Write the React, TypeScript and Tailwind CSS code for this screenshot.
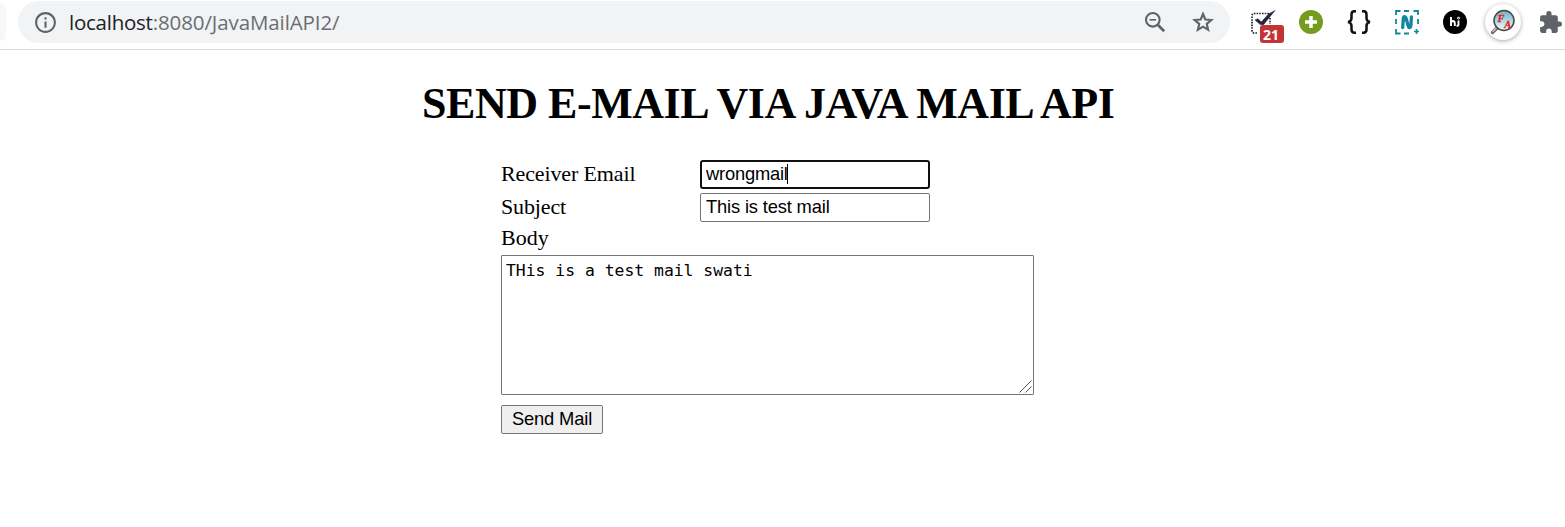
import { MdExtension, MdInfoOutline } from "react-icons/md";

function StarIcon() {
  return (
    <svg width="26" height="26" viewBox="0 0 24 24" fill="none" stroke="#5f6368" strokeWidth="2">
      <path d="M12 4.600l2.150 5.080 5.500.47-4.170 3.620 1.250 5.380L12 16.300l-4.730 2.850 1.250-5.380-4.170-3.620 5.500-.47z" />
    </svg>
  );
}

function ZoomOutIcon() {
  return (
    <svg width="22" height="22" viewBox="0 0 22 22" fill="none" stroke="#5f6368" strokeWidth="2.1">
      <circle cx="8.8" cy="8.8" r="6.8" />
      <path d="M13.500 13.500l6.700 6.700" strokeWidth="2.7" />
      <path d="M5.500 8.800h6.600" strokeWidth="1.6" />
    </svg>
  );
}

function TaskIcon() {
  return (
    <svg width="36" height="34" viewBox="0 0 36 34">
      <path d="M19 8.500H4.500Q2 8.500 2 11V25.500Q2 28 4.500 28H8M20 13V19" fill="none" stroke="#26243b" strokeWidth="1.7" strokeDasharray="1.6 1.1" />
      <path d="M5 15l3-1.300 3.300 3.300L18.500 9l6.500-3.500L13.500 19.700h-3z" fill="#26243b" stroke="#26243b" strokeWidth=".5" />
    </svg>
  );
}

function CaptureIcon() {
  return (
    <svg width="26" height="26" viewBox="0 0 26 26" fill="none" stroke="#108a99">
      <path d="M2 6V2h4.500M10 2h5M19.500 2H24v4M24 10v5M2 10v5M2 20v4.500h4.500M10 24.500h5" strokeWidth="1.8" />
      <path d="M20 22.500h5M22.500 20v5" strokeWidth="1.6" />
      <path d="M8.700 18.500L9.300 9.500C9.600 7 11.300 7 12 9L14.200 17C14.900 19.500 16.700 19 16.900 16.500L17.400 8" strokeWidth="3.300" strokeLinecap="round" strokeLinejoin="round" />
    </svg>
  );
}

function MagnifierIcon() {
  return (
    <svg width="28" height="28" viewBox="0 0 28 28">
      <defs>
        <linearGradient id="lens" x1="0" y1="0" x2="0" y2="1">
          <stop offset="0" stopColor="#65b5ca" />
          <stop offset="1" stopColor="#f5fbfc" />
        </linearGradient>
      </defs>
      <path d="M8 20L3.500 24.500" stroke="#666" strokeWidth="3.2" strokeLinecap="round" />
      <path d="M7.500 20l-4 4" stroke="#ccc" strokeWidth="1.300" />
      <circle cx="15" cy="12.500" r="10" fill="url(#lens)" stroke="#454545" strokeWidth="1.500" />
      <text x="8.600" y="13.500" fontSize="10.500" fontFamily="Liberation Serif, serif" fontStyle="italic" fontWeight="700" fill="#e31b23" stroke="#e31b23" strokeWidth=".3">F</text>
      <text x="15.200" y="19.500" fontSize="10.500" fontFamily="Liberation Serif, serif" fontStyle="italic" fontWeight="700" fill="#e31b23" stroke="#e31b23" strokeWidth=".3">A</text>
    </svg>
  );
}

function Toolbar() {
  return (
    <header className="flex h-[50px] items-start overflow-hidden border-b border-[#d9dadc] bg-white">
      <div className="mt-[3px] h-[38px] w-1.5 shrink-0 rounded-r-full bg-[#f8f8f8]" />
      <div className="mt-px ml-3 flex h-[42px] w-[1212px] shrink-0 items-center rounded-full bg-[#f1f3f4] pl-[15px] pr-[14px]">
        <MdInfoOutline size={25} color="#5f6368" />
        <div className="ml-[11px] font-['Open_Sans','Noto_Sans',sans-serif] text-[20.5px] leading-[42px] whitespace-nowrap text-[#6b6e72]">
          <span className="tracking-[-0.25px] text-[#202124]">localhost</span>
          <span className="tracking-[-0.1px]">:8080/JavaMailAPI2/</span>
        </div>
        <div className="ml-auto flex items-center gap-6">
          <ZoomOutIcon />
          <StarIcon />
        </div>
      </div>
      <div className="ml-5 flex h-[44px] shrink-0 items-center">
        <div className="relative h-[34px] w-9">
          <TaskIcon />
          <span className="absolute left-[10px] top-[20px] flex h-[18px] w-6 items-center justify-center rounded-[3px] bg-[#c53434] pr-0.5 font-['Open_Sans',sans-serif] text-[14px] font-bold text-white">21</span>
        </div>
        <svg className="ml-[13px]" width="24" height="24" viewBox="0 0 24 24">
          <circle cx="12" cy="12" r="12" fill="#759c21" />
          <path d="M12 6v12M6 12h12" stroke="white" strokeWidth="3.500" />
        </svg>
        <svg className="ml-6" width="24" height="24" viewBox="0 0 24 24" fill="none" stroke="#111" strokeWidth="2.500">
          <path d="M9 1.300H7.500Q4.500 1.300 4.500 4.500V8Q4.500 11.500 1 12Q4.500 12.500 4.500 16V19.500Q4.500 22.700 7.500 22.700H9M15 1.300h1.500q3 0 3 3.200V8Q19.500 11.500 23 12Q19.500 12.500 19.500 16v3.500q0 3.200-3 3.200H15" />
        </svg>
        <div className="-ml-px pl-6"><CaptureIcon /></div>
        <div className="ml-[23px] flex size-6 items-center justify-center rounded-full bg-black">
          <svg width="12" height="13" viewBox="0 0 12 13" fill="none" stroke="white" strokeWidth="1.900">
            <path d="M2 1v9M2 10V7.500q0-2.500 1.900-2.500t1.900 2.500V10M9.500 4.500v4q0 1.700-2 1.200" />
            <circle cx="9.500" cy="2.200" r=".4" />
          </svg>
        </div>
        <div className="ml-[18px] flex size-9 items-center justify-center rounded-full bg-white shadow-[0_1px_4px_rgba(0,0,0,0.35)]">
          <MagnifierIcon />
        </div>
        <MdExtension className="ml-[17px] shrink-0" size={25} color="#5f6368" />
      </div>
    </header>
  );
}

export default function App() {
  return (
    <div className="min-h-[527px] bg-white text-black">
      <Toolbar />
      <main className="flex flex-col items-start font-['Liberation_Serif',serif] text-[22px] leading-[25px]">
        <h1 className="mt-[29px] ml-[422px] text-[44px] leading-[50px] font-bold tracking-[-0.45px] whitespace-nowrap">SEND E-MAIL VIA JAVA MAIL API</h1>
        <form className="mt-[31px] ml-[501px] w-[533px]">
          <div className="flex h-[29px] items-center">
            <label className="w-[199px] pb-[3px] tracking-[-0.13px]">Receiver Email</label>
            <div className="relative">
              <input readOnly value="wrongmail" className="block h-[29px] w-[230px] rounded-[3px] border-2 border-[#101010] px-1 pb-0.5 font-['Liberation_Sans',sans-serif] text-[18.33px] tracking-[-0.2px] outline-none" />
              <span className="absolute left-[87px] top-1 h-5 w-px bg-black" />
            </div>
          </div>
          <div className="mt-1 flex h-[29px] items-center">
            <label className="w-[199px] pb-[3px] tracking-[-0.13px]">Subject</label>
            <input readOnly value="This is test mail" className="h-[29px] w-[230px] rounded-[2px] border border-[#767676] px-[5px] pb-0.5 font-['Liberation_Sans',sans-serif] text-[18.33px] tracking-[-0.16px] outline-none" />
          </div>
          <label className="mt-[3px] block">Body</label>
          <div className="relative mt-[5px]">
            <textarea readOnly value="THis is a test mail swati" className="block h-[140px] w-[533px] resize-none rounded-[1px] border border-[#767676] px-1 py-[5px] font-['DejaVu_Sans_Mono',monospace] text-[16.4px] leading-5 outline-none" />
            <svg className="absolute right-[2px] bottom-[2px]" width="13" height="13" viewBox="0 0 13 13" stroke="#555" strokeWidth="1">
              <path d="M.5 12.500l12-12M6.500 12.500l6-6" />
            </svg>
          </div>
          <button type="button" className="mt-[10px] block h-[29px] w-[102px] rounded-[2px] border border-[#767676] bg-[#efefef] pb-0.5 text-center font-['Liberation_Sans',sans-serif] text-[18.33px] leading-[25px] tracking-[-0.15px] whitespace-nowrap">Send Mail</button>
        </form>
      </main>
    </div>
  );
}
